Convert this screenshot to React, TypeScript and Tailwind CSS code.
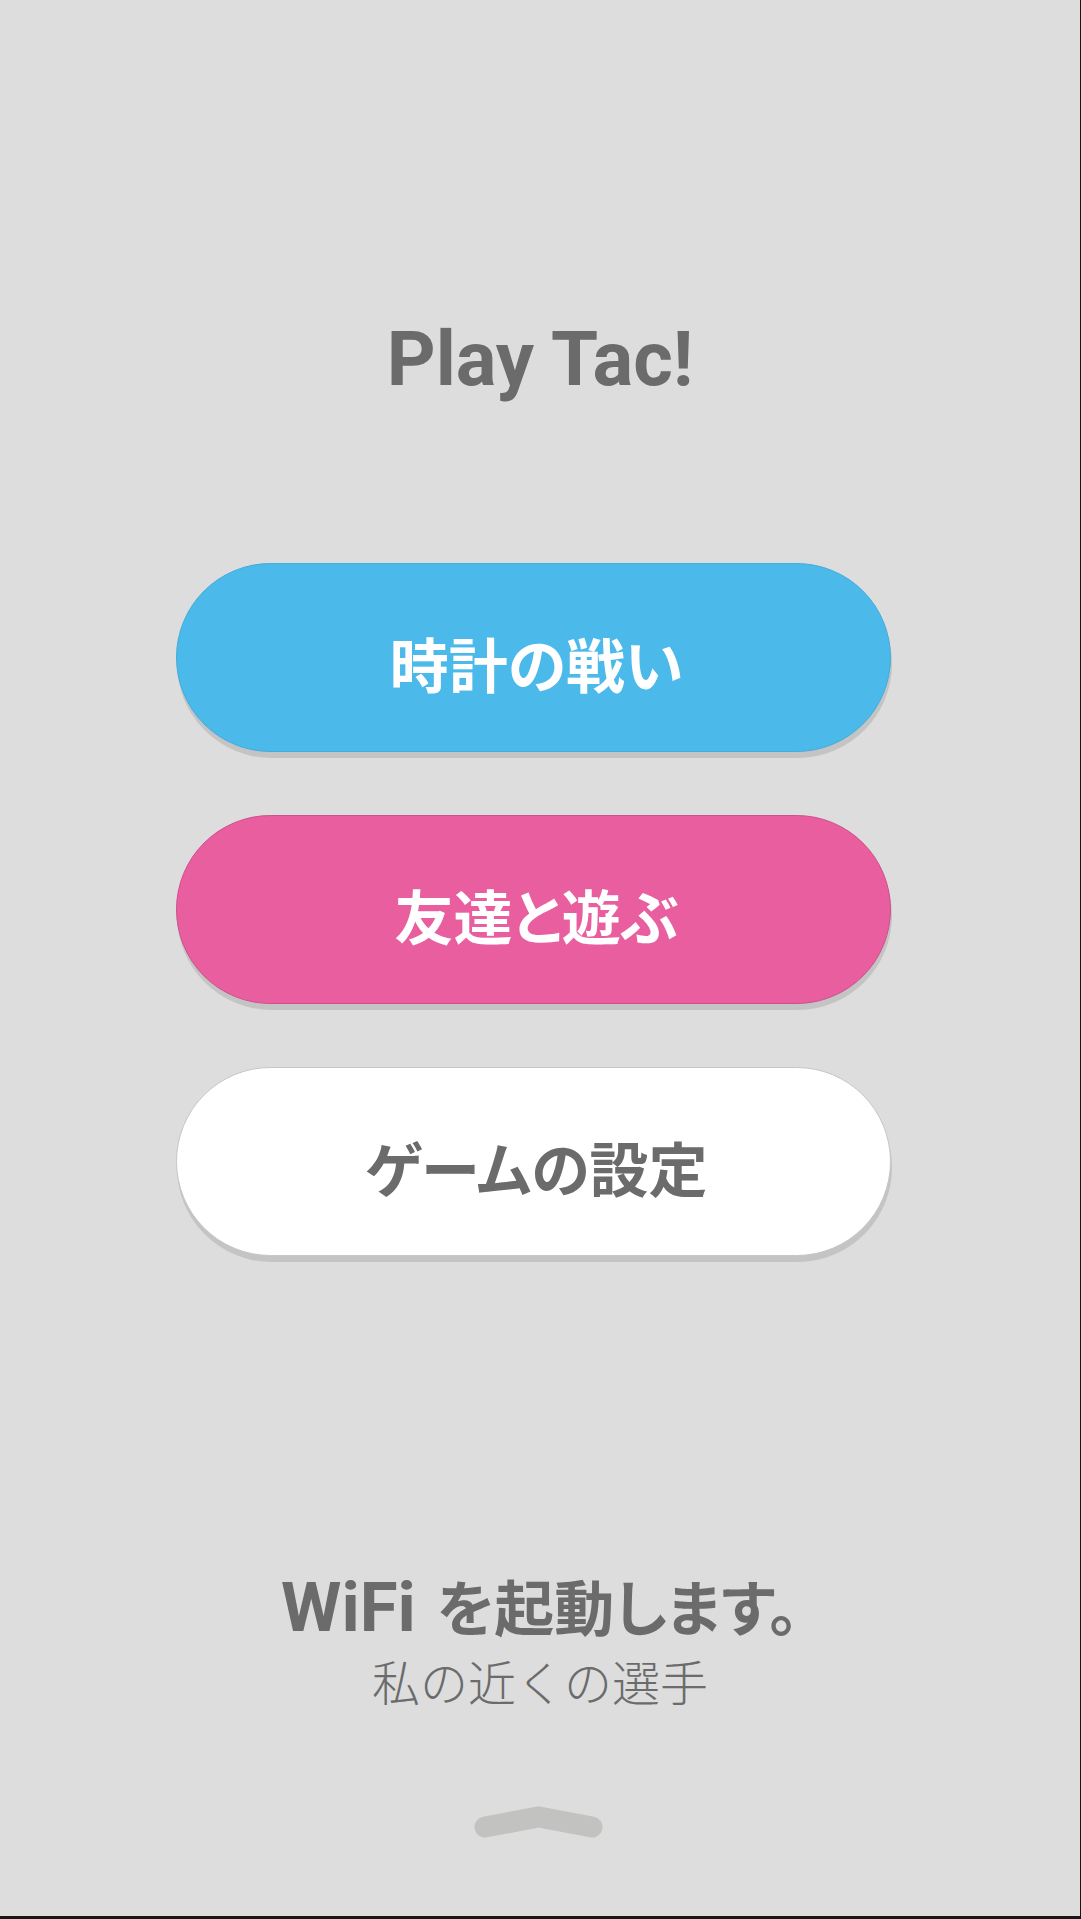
const JP = "font-['Noto_Sans_CJK_JP',sans-serif]"

function MenuButton({ label, tone }: { label: string; tone: 'blue' | 'pink' | 'white' }) {
  const skin =
    tone === 'blue'
      ? 'bg-[#4bb9ea] border-[#43acdb] text-white'
      : tone === 'pink'
        ? 'bg-[#e85e9e] border-[#cf4f8b] text-white'
        : 'bg-white border-[#c6c6c6] text-[#6b6b6b]'
  return (
    <button
      className={`flex h-[189px] w-[715px] items-center justify-center rounded-full border pt-[10px] pl-[6px] shadow-[1px_6px_0_#c4c4c4] ${skin}`}
    >
      <span className="font-['Noto_Sans_CJK_JP',sans-serif] text-[59px] font-bold leading-none [font-feature-settings:'palt']">
        {label}
      </span>
    </button>
  )
}

export default function App() {
  return (
    <div className="box-border flex h-[1919px] w-[1081px] flex-col border-r border-b-[3px] border-[#1b1616] bg-[#dddddd]">
      {/* title */}
      <h1 className="mt-[321px] text-center font-['Roboto',sans-serif] text-[76px] font-bold leading-none text-[#6b6b6b]">
        Play Tac!
      </h1>

      {/* menu */}
      <div className="ml-[176px] mt-[166px] flex flex-col gap-[63px]">
        <MenuButton label="時計の戦い" tone="blue" />
        <MenuButton label="友達と遊ぶ" tone="pink" />
        <MenuButton label="ゲームの設定" tone="white" />
      </div>

      {/* nearby */}
      <p className="mt-[317px] flex items-baseline justify-center font-bold leading-none text-[#6b6b6b]">
        <span className="font-['Roboto',sans-serif] text-[69px]">WiFi</span>
        <span className={`ml-[21px] text-[60px] ${JP} [font-feature-settings:'palt']`}>を起動します。</span>
      </p>
      <p className={`mt-[14px] text-center text-[48px] font-light leading-none text-[#6b6b6b] ${JP}`}>
        私の近くの選手
      </p>

      <svg className="ml-[473px] mt-[96px]" width="130" height="40" viewBox="0 0 130 40" fill="none">
        <polyline
          points="12,27 65.5,17 119,27"
          stroke="#c2c2c1"
          strokeWidth="21"
          strokeLinecap="round"
          strokeLinejoin="miter"
        />
      </svg>
    </div>
  )
}
